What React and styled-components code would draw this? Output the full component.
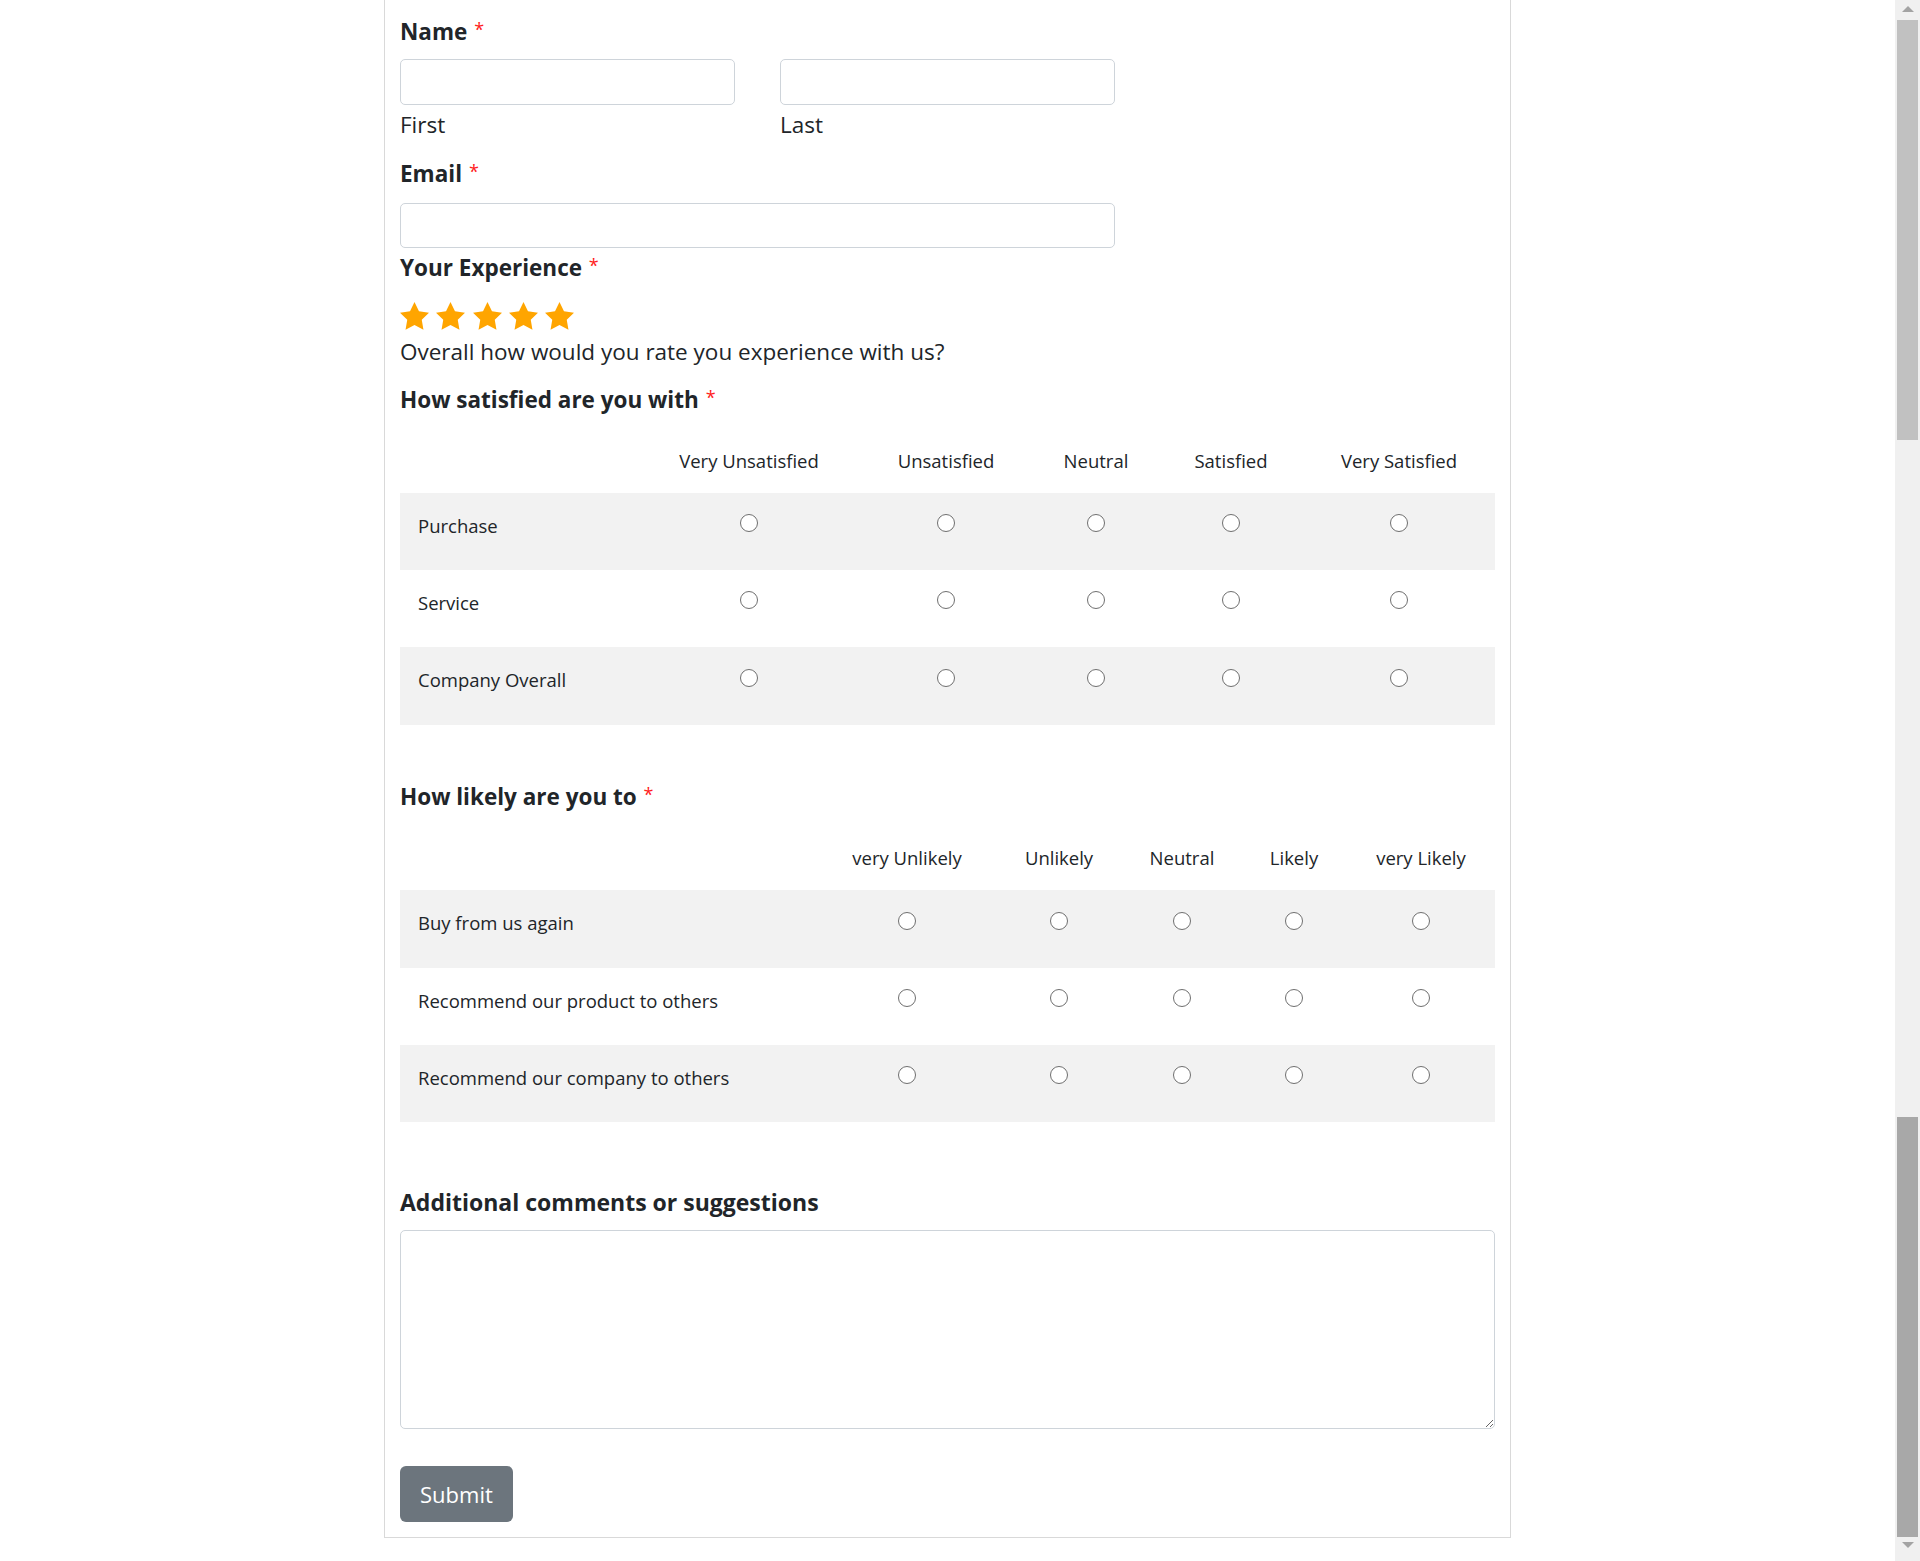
import React from 'react';
import styled, { createGlobalStyle } from 'styled-components';

const GlobalStyle = createGlobalStyle`
  html, body {
    margin: 0;
    padding: 0;
    background: #fff;
  }
  body {
    font-family: "Open Sans", "Noto Sans", sans-serif;
    color: #212529;
  }
  * {
    box-sizing: border-box;
  }
`;

const satisfaction = {
  name: 'satisfied',
  title: 'How satisfied are you with',
  cols: '239px 220px 174px 126px 144px 192px',
  headers: ['Very Unsatisfied', 'Unsatisfied', 'Neutral', 'Satisfied', 'Very Satisfied'],
  rows: ['Purchase', 'Service', 'Company Overall'],
};

const likelihood = {
  name: 'likely',
  title: 'How likely are you to',
  cols: '419px 176px 128px 118px 106px 148px',
  headers: ['very Unlikely', 'Unlikely', 'Neutral', 'Likely', 'very Likely'],
  rows: ['Buy from us again', 'Recommend our product to others', 'Recommend our company to others'],
};

const Star = () => (
  <svg width="29" height="28" viewBox="1 0.4 22 21.1" aria-hidden="true">
    <path
      fill="#ffa500"
      d="M12 0.4l3.4 6.9 7.6 1.1-5.5 5.4 1.3 7.6L12 17.8l-6.8 3.6 1.3-7.6L1 8.4l7.6-1.1z"
    />
  </svg>
);

const MatrixQuestion = ({ data, gap, headerHeight, headerPad }) => (
  <Matrix $gap={gap}>
    <FieldLabel $top={0}>
      {data.title} <Required>*</Required>
    </FieldLabel>
    <HeaderRow $cols={data.cols} $height={headerHeight} $pad={headerPad}>
      <span />
      {data.headers.map((h) => (
        <HeaderCell key={h}>{h}</HeaderCell>
      ))}
    </HeaderRow>
    {data.rows.map((row, i) => (
      <MatrixRow key={row} $cols={data.cols} $shaded={i % 2 === 0}>
        <RowLabel>{row}</RowLabel>
        {data.headers.map((h) => (
          <RadioCell key={h}>
            <Radio type="radio" name={`${data.name}-${i}`} aria-label={`${row}: ${h}`} />
          </RadioCell>
        ))}
      </MatrixRow>
    ))}
  </Matrix>
);

export default function App() {
  return (
    <>
      <GlobalStyle />
      <Page>
        <Main>
          <Card>
            <FieldLabel $top={15}>
              Name <Required>*</Required>
            </FieldLabel>
            <NameRow>
              <NameField>
                <TextInput type="text" />
                <SubLabel>First</SubLabel>
              </NameField>
              <NameField>
                <TextInput type="text" />
                <SubLabel>Last</SubLabel>
              </NameField>
            </NameRow>

            <FieldLabel $top={15}>
              Email <Required>*</Required>
            </FieldLabel>
            <EmailInput type="email" />

            <FieldLabel $top={3}>
              Your Experience <Required>*</Required>
            </FieldLabel>
            <Stars>
              {[1, 2, 3, 4, 5].map((n) => (
                <Star key={n} />
              ))}
            </Stars>
            <Hint>Overall how would you rate you experience with us?</Hint>

            <MatrixQuestion data={satisfaction} gap={14} headerHeight={75.7} headerPad={17.5} />
            <MatrixQuestion data={likelihood} gap={55} headerHeight={76.7} headerPad={18.5} />

            <SectionTitle>Additional comments or suggestions</SectionTitle>
            <Comments />
            <SubmitButton type="button">Submit</SubmitButton>
          </Card>
        </Main>

        <Scrollbar>
          <ScrollArrow $up />
          <Thumb $top={3} />
          <ScrollSpacer />
          <Thumb $dark />
          <ScrollArrow />
        </Scrollbar>
      </Page>
    </>
  );
}

const Page = styled.div`
  display: flex;
  width: 1920px;
  min-height: 1561px;
`;

const Main = styled.div`
  flex: 1;
`;

const Card = styled.form`
  width: 1127px;
  margin-left: 384px;
  padding: 0 15px 15px;
  border: 1px solid #d9d9d9;
  border-top: none;
  display: flex;
  flex-direction: column;
  align-items: flex-start;
`;

const FieldLabel = styled.div`
  margin-top: ${(p) => p.$top}px;
  font-size: 22.5px;
  font-weight: 700;
  line-height: 34px;
  color: #212529;
`;

const Required = styled.span`
  color: #ff2020;
  font-weight: 400;
  font-size: 18px;
  line-height: 0;
  vertical-align: 4px;
  margin-left: 1px;
`;

const NameRow = styled.div`
  display: flex;
  gap: 45px;
  margin-top: 10px;
`;

const NameField = styled.div`
  display: flex;
  flex-direction: column;
  width: 335px;
`;

const TextInput = styled.input`
  width: 100%;
  height: 46px;
  border: 1px solid #ced4da;
  border-radius: 5px;
  background: #fff;
  font: inherit;
  padding: 0 14px;
  outline: none;
`;

const EmailInput = styled(TextInput)`
  width: 715px;
  height: 45px;
  margin-top: 12px;
`;

const SubLabel = styled.div`
  margin-top: 3px;
  font-size: 22.5px;
  line-height: 34px;
`;

const Stars = styled.div`
  display: flex;
  gap: 7.3px;
  margin-top: 17px;
  height: 28px;
`;

const Hint = styled.div`
  margin-top: 5px;
  font-size: 22.5px;
  line-height: 34px;
`;

const Matrix = styled.div`
  width: 100%;
  margin-top: ${(p) => p.$gap}px;
  display: flex;
  flex-direction: column;
`;

const HeaderRow = styled.div`
  display: grid;
  grid-template-columns: ${(p) => p.$cols};
  height: ${(p) => p.$height}px;
  align-items: end;
  padding-bottom: ${(p) => p.$pad}px;
`;

const HeaderCell = styled.div`
  text-align: center;
  font-size: 18.5px;
  line-height: 28px;
  white-space: nowrap;
`;

const MatrixRow = styled.div`
  display: grid;
  grid-template-columns: ${(p) => p.$cols};
  height: 77.3px;
  align-items: start;
  padding-top: 19px;
  background: ${(p) => (p.$shaded ? '#f2f2f2' : 'transparent')};
`;

const RowLabel = styled.div`
  padding-left: 18px;
  font-size: 18.5px;
  line-height: 28px;
  white-space: nowrap;
`;

const RadioCell = styled.div`
  display: flex;
  justify-content: center;
  padding-top: 2.5px;
`;

const Radio = styled.input`
  appearance: none;
  width: 18px;
  height: 18px;
  margin: 0;
  border: 1.5px solid #6f6f6f;
  border-radius: 50%;
  background: #fff;
  cursor: pointer;

  &:checked {
    border: 5px solid #0d6efd;
  }
`;

const SectionTitle = styled.div`
  margin-top: 65px;
  font-size: 23px;
  font-weight: 700;
  line-height: 30px;
`;

const Comments = styled.textarea`
  width: 100%;
  height: 199px;
  margin-top: 13px;
  border: 1px solid #ced4da;
  border-radius: 5px;
  font: inherit;
  padding: 8px 14px;
  outline: none;
`;

const SubmitButton = styled.button`
  margin-top: 37px;
  height: 56px;
  padding: 0 20px;
  border: none;
  border-radius: 6px;
  background: #6c757d;
  color: #fff;
  font-family: inherit;
  font-size: 22px;
  cursor: pointer;
`;

const Scrollbar = styled.div`
  width: 25px;
  background: #f0f0f0;
  display: flex;
  flex-direction: column;
  align-items: center;
`;

const ScrollArrow = styled.div`
  height: ${(p) => (p.$up ? '17px' : '24px')};
  width: 100%;
  display: flex;
  justify-content: center;
  align-items: ${(p) => (p.$up ? 'center' : 'flex-start')};
  padding-top: ${(p) => (p.$up ? '0' : '5px')};

  &::before {
    content: '';
    border-left: 6px solid transparent;
    border-right: 6px solid transparent;
    ${(p) =>
      p.$up ? 'border-bottom: 6px solid #a3a3a3;' : 'border-top: 6px solid #a3a3a3;'}
  }
`;

const Thumb = styled.div`
  width: 21px;
  height: 420px;
  margin-top: ${(p) => p.$top || 0}px;
  background: ${(p) => (p.$dark ? '#a8a8a8' : '#c1c1c1')};
`;

const ScrollSpacer = styled.div`
  flex: 1;
`;
